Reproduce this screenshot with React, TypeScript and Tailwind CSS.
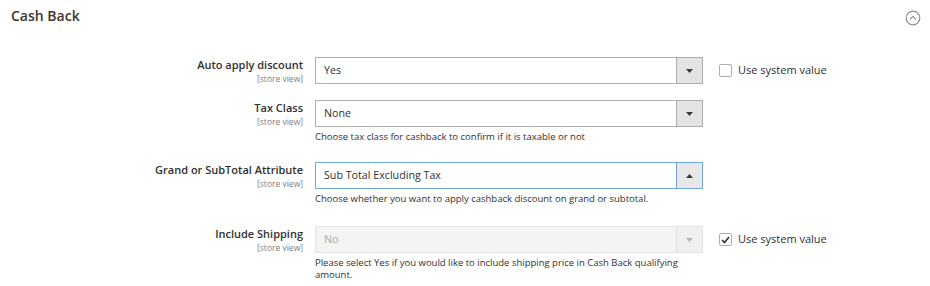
import React from 'react';

type Row = {
  label: string;
  value: string;
  note?: string;
  open?: boolean;
  disabled?: boolean;
  system?: boolean | null;
  mb: string;
};

const rows: Row[] = [
  { label: 'Auto apply discount', value: 'Yes', system: false, mb: 'mb-[16px]' },
  {
    label: 'Tax Class',
    value: 'None',
    note: 'Choose tax class for cashback to confirm if it is taxable or not',
    system: null,
    mb: 'mb-[19px]',
  },
  {
    label: 'Grand or SubTotal Attribute',
    value: 'Sub Total Excluding Tax',
    note: 'Choose whether you want to apply cashback discount on grand or subtotal.',
    open: true,
    system: null,
    mb: 'mb-[21px]',
  },
  {
    label: 'Include Shipping',
    value: 'No',
    note: 'Please select Yes if you would like to include shipping price in Cash Back qualifying amount.',
    disabled: true,
    system: true,
    mb: 'mb-0',
  },
];

function Arrow({ up, disabled }: { up?: boolean; disabled?: boolean }) {
  return (
    <svg width="7" height="4" viewBox="0 0 7 4" className="block">
      {up ? (
        <polygon points="0,4 7,4 3.5,0" fill={disabled ? '#b5b5b5' : '#41362f'} />
      ) : (
        <polygon points="0,0 7,0 3.5,4" fill={disabled ? '#b5b5b5' : '#41362f'} />
      )}
    </svg>
  );
}

function Select({ row }: { row: Row }) {
  const border = row.open ? 'border-[#6fa8dc]' : row.disabled ? 'border-[#e3e3e3]' : 'border-[#adadad]';
  return (
    <div className={`flex h-[27px] w-[388px] border ${border} ${row.disabled ? 'bg-[#f4f4f4]' : 'bg-white'}`}>
      <div
        className={`flex-1 flex items-center pl-[8px] text-[10.7px] ${row.disabled ? 'text-[#a8a8a8]' : 'text-[#303030]'}`}
      >
        {row.value}
      </div>
      <div
        className={`w-[26px] flex items-center justify-center border-l ${border} ${
          row.disabled ? 'bg-[#f0f0f0]' : row.open ? 'bg-[#e8e8e8]' : 'bg-[#e3e3e3]'
        }`}
      >
        <Arrow up={row.open} disabled={row.disabled} />
      </div>
    </div>
  );
}

function Checkbox({ checked }: { checked: boolean }) {
  return (
    <div className="flex items-center gap-[6px] ml-[16px] h-[27px]">
      <div className="w-[13px] h-[13px] border border-[#adadad] rounded-[2px] bg-white flex items-center justify-center">
        {checked && (
          <svg width="9" height="8" viewBox="0 0 9 8">
            <polyline points="1,4 3.5,6.5 8,1" fill="none" stroke="#303030" strokeWidth="1.6" />
          </svg>
        )}
      </div>
      <span className="text-[11px] text-[#303030]">Use system value</span>
    </div>
  );
}

export default function App() {
  return (
    <div className="w-[930px] h-[286px] bg-white overflow-hidden" style={{ fontFamily: '"Open Sans", sans-serif' }}>
      <div className="flex items-center justify-between pl-[11px] pr-[9px] pt-[6px] h-[26px]">
        <h2 className="text-[14px] leading-[20px] font-semibold text-[#41362f]">Cash Back</h2>
        <svg width="16" height="16" viewBox="0 0 16 16" className="mt-[3px]">
          <circle cx="8" cy="8" r="6.8" fill="none" stroke="#8f8f8f" strokeWidth="1.2" />
          <polyline points="5,9.3 8,6.3 11,9.3" fill="none" stroke="#8f8f8f" strokeWidth="1.2" />
        </svg>
      </div>

      <div className="pt-[31px]">
        {rows.map((row) => (
          <div key={row.label} className={`flex ${row.mb}`}>
            <div className="w-[303px] text-right pt-[1px]">
              <div className="text-[11px] leading-[14px] font-semibold text-[#303030]">{row.label}</div>
              <div className="text-[8.5px] leading-[11px] text-[#808080] mt-[1px]">[store view]</div>
            </div>
            <div className="ml-[12px] w-[388px]">
              <Select row={row} />
              {row.note && (
                <p className="mt-[4px] text-[9.5px] leading-[12px] text-[#303030]">{row.note}</p>
              )}
            </div>
            {row.system !== null && row.system !== undefined && <Checkbox checked={row.system} />}
          </div>
        ))}
      </div>
    </div>
  );
}
